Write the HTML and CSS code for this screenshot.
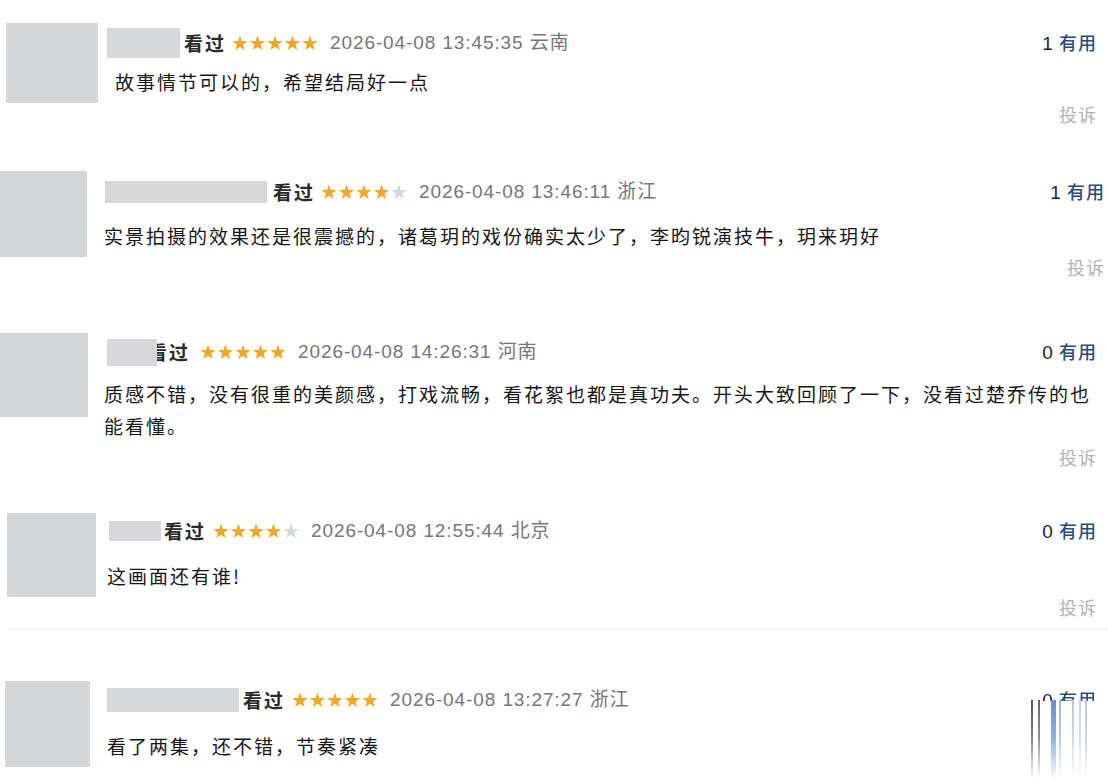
FILE: index.html
```html
<!DOCTYPE html>
<html lang="zh-CN">
<head>
<meta charset="utf-8">
<title>短评</title>
<link rel="stylesheet" href="styles.css">
</head>
<body>
<svg class="defs" width="0" height="0" aria-hidden="true">
  <defs>
    <symbol id="star" viewBox="0 0 16 16">
      <polygon points="8,0.4 9.9,5.9 15.6,6 11.1,9.5 12.7,15 8,11.7 3.3,15 4.9,9.5 0.4,6 6.1,5.9"/>
    </symbol>
  </defs>
</svg>

<main class="feed">
  <article class="review review--1">
    <div class="avatar"></div>
    <div class="body">
      <div class="head">
        <span class="name"></span>
        <span class="seen">看过</span>
        <svg class="stars" viewBox="0 0 86 16" width="86" height="16">
          <use href="#star" x="0" width="16" height="16" class="on"/>
          <use href="#star" x="17.5" width="16" height="16" class="on"/>
          <use href="#star" x="35" width="16" height="16" class="on"/>
          <use href="#star" x="52.5" width="16" height="16" class="on"/>
          <use href="#star" x="70" width="16" height="16" class="on"/>
        </svg>
        <span class="date">2026-04-08 13:45:35 云南</span>
        <span class="useful"><span class="num">1</span> 有用</span>
      </div>
      <p class="text">故事情节可以的，希望结局好一点</p>
      <div class="report">投诉</div>
    </div>
  </article>

  <article class="review review--2">
    <div class="avatar"></div>
    <div class="body">
      <div class="head">
        <span class="name"></span>
        <span class="seen">看过</span>
        <svg class="stars" viewBox="0 0 86 16" width="86" height="16">
          <use href="#star" x="0" width="16" height="16" class="on"/>
          <use href="#star" x="17.5" width="16" height="16" class="on"/>
          <use href="#star" x="35" width="16" height="16" class="on"/>
          <use href="#star" x="52.5" width="16" height="16" class="on"/>
          <use href="#star" x="70" width="16" height="16" class="off"/>
        </svg>
        <span class="date">2026-04-08 13:46:11 浙江</span>
        <span class="useful"><span class="num">1</span> 有用</span>
      </div>
      <p class="text">实景拍摄的效果还是很震撼的，诸葛玥的戏份确实太少了，李昀锐演技牛，玥来玥好</p>
      <div class="report">投诉</div>
    </div>
  </article>

  <article class="review review--3">
    <div class="avatar"></div>
    <div class="body">
      <div class="head">
        <span class="name"></span>
        <span class="seen">看过</span>
        <svg class="stars" viewBox="0 0 86 16" width="86" height="16">
          <use href="#star" x="0" width="16" height="16" class="on"/>
          <use href="#star" x="17.5" width="16" height="16" class="on"/>
          <use href="#star" x="35" width="16" height="16" class="on"/>
          <use href="#star" x="52.5" width="16" height="16" class="on"/>
          <use href="#star" x="70" width="16" height="16" class="on"/>
        </svg>
        <span class="date">2026-04-08 14:26:31 河南</span>
        <span class="useful"><span class="num">0</span> 有用</span>
      </div>
      <p class="text">质感不错，没有很重的美颜感，打戏流畅，看花絮也都是真功夫。开头大致回顾了一下，没看过楚乔传的也能看懂。</p>
      <div class="report">投诉</div>
    </div>
  </article>

  <article class="review review--4">
    <div class="avatar"></div>
    <div class="body">
      <div class="head">
        <span class="name"></span>
        <span class="seen">看过</span>
        <svg class="stars" viewBox="0 0 86 16" width="86" height="16">
          <use href="#star" x="0" width="16" height="16" class="on"/>
          <use href="#star" x="17.5" width="16" height="16" class="on"/>
          <use href="#star" x="35" width="16" height="16" class="on"/>
          <use href="#star" x="52.5" width="16" height="16" class="on"/>
          <use href="#star" x="70" width="16" height="16" class="off"/>
        </svg>
        <span class="date">2026-04-08 12:55:44 北京</span>
        <span class="useful"><span class="num">0</span> 有用</span>
      </div>
      <p class="text">这画面还有谁!</p>
      <div class="report">投诉</div>
    </div>
  </article>

  <article class="review review--5">
    <div class="avatar"></div>
    <div class="body">
      <div class="head">
        <span class="name"></span>
        <span class="seen">看过</span>
        <svg class="stars" viewBox="0 0 86 16" width="86" height="16">
          <use href="#star" x="0" width="16" height="16" class="on"/>
          <use href="#star" x="17.5" width="16" height="16" class="on"/>
          <use href="#star" x="35" width="16" height="16" class="on"/>
          <use href="#star" x="52.5" width="16" height="16" class="on"/>
          <use href="#star" x="70" width="16" height="16" class="on"/>
        </svg>
        <span class="date">2026-04-08 13:27:27 浙江</span>
        <span class="useful useful--glitch"><span class="num">0</span> 有用</span>
      </div>
      <p class="text">看了两集，还不错，节奏紧凑</p>
    </div>
  </article>
</main>
</body>
</html>
```

FILE: styles.css
```css
* { box-sizing: border-box; }

html, body {
  margin: 0;
  padding: 0;
  background: #ffffff;
}

body {
  width: 1108px;
  height: 782px;
  overflow: hidden;
  font-family: "Liberation Sans", "Noto Sans CJK SC", sans-serif;
  color: #222;
}

.defs { position: absolute; width: 0; height: 0; }

.feed {
  display: flex;
  flex-direction: column;
}

.review {
  display: flex;
  align-items: flex-start;
}

.avatar {
  flex: none;
  background: #d5d6da;
}

.body {
  flex: 1;
  min-width: 0;
  display: flex;
  flex-direction: column;
}

.head {
  display: flex;
  align-items: center;
  height: 30px;
  line-height: 30px;
  white-space: nowrap;
}

.name {
  flex: none;
  background: #d6d7da;
}

.seen {
  font-family: "Noto Sans CJK SC", sans-serif;
  font-size: 19px;
  letter-spacing: 2px;
  color: #2a2a2a;
  font-weight: 600;
}

.stars {
  flex: none;
  margin-left: 4px;
  display: block;
}
.stars .on { fill: #f7a624; }
.stars .off { fill: #cfd7e3; }

.date {
  margin-left: 12px;
  font-size: 19px;
  letter-spacing: 0.9px;
  color: #767676;
}

.useful {
  margin-left: auto;
  font-family: "Noto Sans CJK SC", sans-serif;
  font-size: 18px;
  letter-spacing: 1px;
  font-weight: 500;
  color: #2b4a7c;
}
.useful .num {
  font-family: "Liberation Sans", sans-serif;
  font-size: 19px;
  font-weight: 400;
  color: #1f1f1f;
}

.useful--glitch {
  -webkit-mask-image: linear-gradient(to bottom, #000 0, #000 52%, transparent 52%);
  mask-image: linear-gradient(to bottom, #000 0, #000 52%, transparent 52%);
}
.review--5 .head { position: relative; }
.review--5 .head::after {
  content: "";
  position: absolute;
  right: 9px;
  top: 15px;
  width: 58px;
  height: 80px;
  background:
    linear-gradient(to bottom, rgba(255,255,255,0) 0, rgba(255,255,255,0.25) 45%, #fff 100%),
    linear-gradient(to right,
      transparent 0, transparent 1px, #555 1px, #555 3px, transparent 3px,
      transparent 8px, #666 8px, #666 10px, transparent 10px,
      transparent 21px, #6b8fd0 21px, #6b8fd0 26px, transparent 26px,
      transparent 29px, #9fb6e4 29px, #9fb6e4 31px, transparent 31px,
      transparent 42px, #b8c8ea 42px, #b8c8ea 44px, transparent 44px,
      transparent 49px, #c7d3ee 49px, #c7d3ee 51px, transparent 51px,
      transparent 55px, #b6c6e8 55px, #b6c6e8 57px, transparent 57px);
}

.text {
  margin: 0;
  font-family: "Noto Sans CJK SC", sans-serif;
  font-size: 19px;
  letter-spacing: 2px;
  line-height: 30px;
  color: #161616;
}

.report {
  align-self: flex-end;
  font-family: "Noto Sans CJK SC", sans-serif;
  font-size: 18px;
  letter-spacing: 1px;
  line-height: 24px;
  color: #b3b3b3;
}

/* Row 1 */
.review--1 { height: 160px; padding-top: 23px; }
.review--1 .avatar { width: 92px; height: 80px; margin-left: 6px; }
.review--1 .body { margin-left: 9px; margin-right: 11px; padding-top: 5px; }
.review--1 .name { width: 73px; height: 30px; margin-right: 4px; }
.review--1 .stars { margin-left: 6px; }
.review--1 .text { margin-top: 9px; padding-left: 8px; }
.review--1 .report { margin-top: 5px; }

/* Row 2 */
.review--2 { height: 165px; padding-top: 11px; }
.review--2 .avatar { width: 87px; height: 86px; }
.review--2 .body { margin-left: 17px; margin-right: 3px; padding-top: 6px; }
.review--2 .name { width: 162px; height: 22px; margin-left: 1px; margin-right: 6px; }
.review--2 .stars { margin-left: 6px; }
.review--2 .text { margin-top: 14px; }
.review--2 .report { margin-top: 4px; }

/* Row 3 */
.review--3 { height: 180px; padding-top: 8px; }
.review--3 .avatar { width: 88px; height: 84px; }
.review--3 .body { margin-left: 16px; margin-right: 11px; padding-top: 4px; }
.review--3 .name { position: relative; width: 50px; height: 27px; margin-left: 3px; margin-right: -9px; }
.review--3 .stars { margin-left: 10px; }
.review--3 .text { margin-top: 11px; line-height: 32px; }
.review--3 .report { margin-top: 3px; }

/* Row 4 */
.review--4 {
  height: 124px;
  padding-top: 8px;
  margin-left: 7px;
  border-bottom: 1px solid #ececee;
}
.review--4 .avatar { width: 89px; height: 84px; }
.review--4 .body { margin-left: 11px; margin-right: 11px; padding-top: 3px; }
.review--4 .name { position: relative; width: 52px; height: 20px; margin-left: 2px; margin-right: 3px; }
.review--4 .stars { margin-left: 7px; }
.review--4 .text { margin-top: 15px; }
.review--4 .report { margin-top: 4px; }

/* Row 5 */
.review--5 { height: 152px; padding-top: 52px; }
.review--5 .avatar { width: 85px; height: 86px; margin-left: 5px; }
.review--5 .body { margin-left: 17px; margin-right: 11px; padding-top: 4px; }
.review--5 .name { width: 132px; height: 24px; margin-right: 4px; }
.review--5 .stars { margin-left: 7px; }
.review--5 .text { margin-top: 16px; }
```
